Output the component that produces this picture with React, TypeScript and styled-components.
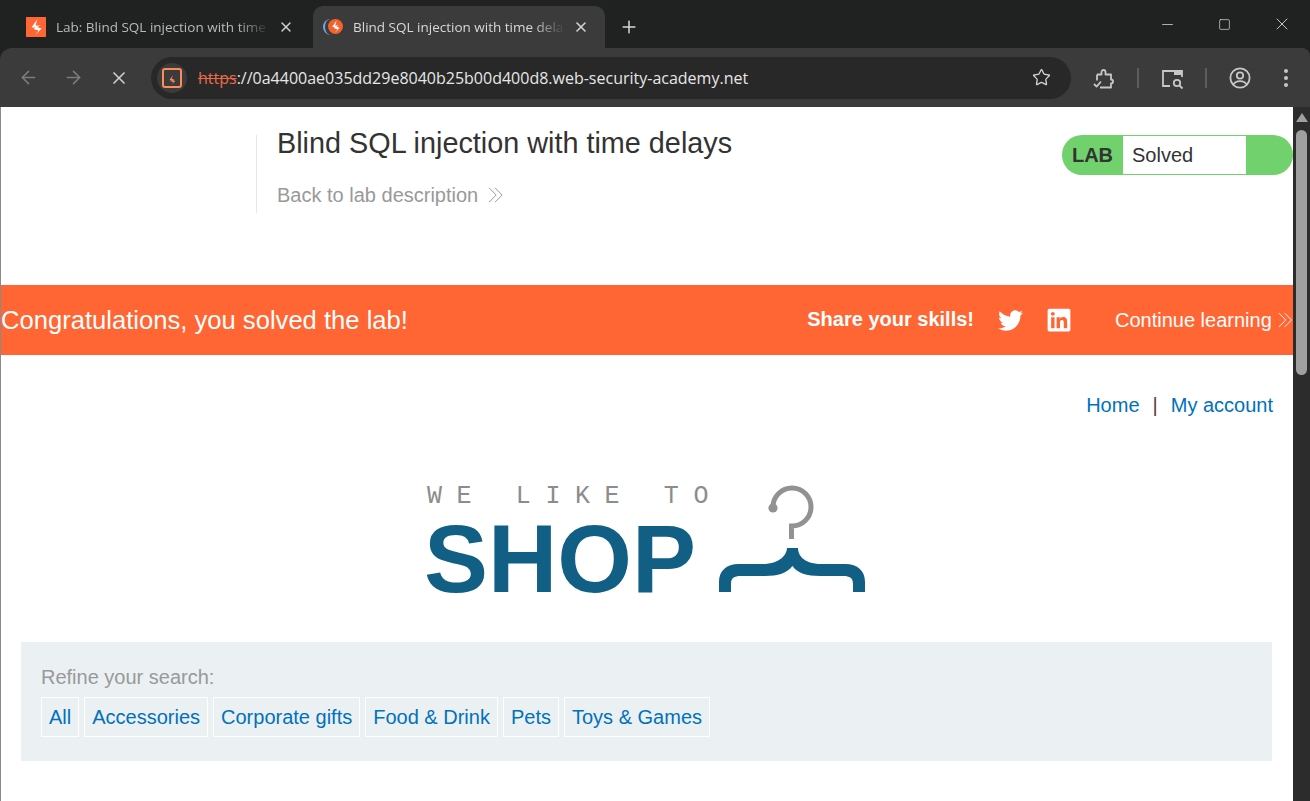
import React from 'react'
import styled, { createGlobalStyle } from 'styled-components'
import { ArrowLeft, ArrowRight, Minus, Plus, Square, Star, X } from 'lucide-react'
import { FaLinkedin, FaTwitter } from 'react-icons/fa'

const GlobalStyle = createGlobalStyle`
  html, body {
    margin: 0;
    padding: 0;
    background: #202221;
    overflow: hidden;
  }
  * { box-sizing: border-box; }
`

const Bolt = ({ color = '#fff' }: { color?: string }) => (
  <svg width="100%" height="100%" viewBox="0 0 20 20">
    <path d="M11.5 2 5.5 10.5h4L7.5 12l5 1.5-3 4.5 6-6.5-4.5-1.5 3.5-1.5H9.5z" fill={color} />
  </svg>
)

const Chevrons = ({ color, size }: { color: string; size: number }) => (
  <svg width={size} height={size} viewBox="0 0 16 16" fill="none" stroke={color} strokeWidth="1">
    <path d="M1 .8 8.2 8 1 15.2" />
    <path d="M7 .8 14.2 8 7 15.2" />
  </svg>
)

const App = () => {
  const filters = ['All', 'Accessories', 'Corporate gifts', 'Food & Drink', 'Pets', 'Toys & Games']

  return (
    <Frame>
      <GlobalStyle />
      <TabStrip>
        <Tab>
          <SquareFavicon><Bolt /></SquareFavicon>
          <TabTitle>Lab: Blind SQL injection with time delays</TabTitle>
          <TabClose><X size={16} strokeWidth={2} /></TabClose>
        </Tab>
        <Tab $active>
          <GlobeFavicon>
            <RoundFavicon><Bolt /></RoundFavicon>
          </GlobeFavicon>
          <TabTitle>Blind SQL injection with time delays</TabTitle>
          <TabClose><X size={16} strokeWidth={2.4} /></TabClose>
        </Tab>
        <NewTab><Plus size={20} strokeWidth={1.8} /></NewTab>
        <WindowControls>
          <WindowButton><Minus size={17} strokeWidth={1} /></WindowButton>
          <WindowButton><Square size={13} strokeWidth={1.2} /></WindowButton>
          <WindowButton><X size={20} strokeWidth={1} /></WindowButton>
        </WindowControls>
      </TabStrip>

      <Toolbar>
        <NavIcon $dim><ArrowLeft size={21} strokeWidth={1.8} /></NavIcon>
        <NavIcon $dim><ArrowRight size={21} strokeWidth={1.8} /></NavIcon>
        <NavIcon><X size={20} strokeWidth={2} /></NavIcon>
        <Omnibox>
          <SiteChip>
            <SiteIcon><Bolt color="#ff8a5c" /></SiteIcon>
          </SiteChip>
          <Url>
            <Insecure>https</Insecure>
            <span>://0a4400ae035dd29e8040b25b00d400d8.web-security-academy.net</span>
          </Url>
          <StarIcon><Star size={19} strokeWidth={1.7} /></StarIcon>
        </Omnibox>
        <ToolIcons>
          <svg width="26" height="26" viewBox="0 0 26 26" fill="none" stroke="#c7c7c7" strokeWidth="1.8" strokeLinejoin="round">
            <path d="M6 9.5h4.5V7a2 2 0 0 1 4 0v2.5H20v5a2 2 0 0 1 0 4v4H9" />
            <path d="M6 9.5v6" />
            <path d="M3 19l2.6 2.6L10 16.5" />
          </svg>
          <ToolDivider />
          <svg width="26" height="26" viewBox="0 0 26 26" fill="none" stroke="#c7c7c7" strokeWidth="1.8">
            <path d="M11 21H4V6h19v6" />
            <path d="M15 6h8v4h-8z" fill="#c7c7c7" stroke="none" />
            <circle cx="18" cy="18" r="3.2" />
            <path d="m20.5 20.5 3 3" />
          </svg>
          <ToolDivider />
          <svg width="26" height="26" viewBox="0 0 26 26" fill="none" stroke="#c7c7c7" strokeWidth="1.8">
            <circle cx="13" cy="13" r="9.6" />
            <circle cx="13" cy="10.5" r="3.2" />
            <path d="M6.2 19.5c1.6-2.6 4-3.4 6.8-3.4s5.2.8 6.8 3.4" />
          </svg>
          <Dots>
            <svg width="6" height="20" viewBox="0 0 6 20" fill="#c7c7c7">
              <circle cx="3" cy="3" r="2" />
              <circle cx="3" cy="10" r="2" />
              <circle cx="3" cy="17" r="2" />
            </svg>
          </Dots>
        </ToolIcons>
      </Toolbar>

      <Viewport>
        <Page>
          <LabHeader>
            <TitleBlock>
              <LabTitle>Blind SQL injection with time delays</LabTitle>
              <BackLink>
                Back to lab description
                <Chevrons color="#999" size={16} />
              </BackLink>
            </TitleBlock>
            <StatusPill>
              <StatusLabel>LAB</StatusLabel>
              <StatusValue>Solved</StatusValue>
            </StatusPill>
          </LabHeader>

          <Banner>
            <Congrats>Congratulations, you solved the lab!</Congrats>
            <ShareText>Share your skills!</ShareText>
            <TwitterIcon><FaTwitter size={25} /></TwitterIcon>
            <LinkedinIcon><FaLinkedin size={26} /></LinkedinIcon>
            <ContinueLink>
              Continue learning
              <Chevrons color="#fff" size={16} />
            </ContinueLink>
          </Banner>

          <AccountNav>
            <NavLink>Home</NavLink>
            <NavSep>|</NavSep>
            <NavLink>My account</NavLink>
          </AccountNav>

          <LogoRow>
            <svg width="445" height="116" viewBox="425 480 445 116">
              <text x="427" y="503" fontFamily="'Liberation Mono', monospace" fontSize="25" letterSpacing="14.6" fill="#8c8c8c">WE LIKE TO</text>
              <text x="424" y="592" fontFamily="'Liberation Sans', Arial, sans-serif" fontWeight="700" fontSize="96" fill="#115f84">SHOP</text>
              <circle cx="773" cy="508" r="4.6" fill="#929292" />
              <path d="M773 507A19 19 0 1 1 791.5 526V539" fill="none" stroke="#929292" strokeWidth="5" />
              <path d="M787 548H798C798 553 801 564 822 564H845C858 564 865 571 865 582V592H853V584C853 578 850 576 843 576H820C807 576 797 573 792.500 566C787 573 778 576 765 576H741C734 576 731 578 731 584V592H719V582C719 571 726 564 739 564H762C782 564 787 553 787 548Z" fill="#115f84" />
            </svg>
          </LogoRow>

          <FilterPanel>
            <FilterLabel>Refine your search:</FilterLabel>
            <FilterRow>
              {filters.map((f) => (
                <FilterButton key={f}>{f}</FilterButton>
              ))}
            </FilterRow>
          </FilterPanel>
        </Page>
        <Scrollbar>
          <ScrollArrow />
          <ScrollThumb />
        </Scrollbar>
      </Viewport>
    </Frame>
  )
}

export default App

const Frame = styled.div`
  width: 1310px;
  height: 801px;
  display: flex;
  flex-direction: column;
  overflow: hidden;
  background: #202221;
`
const TabStrip = styled.div`
  height: 48px;
  display: flex;
  align-items: flex-end;
  padding-left: 13px;
  background: #202221;
`
const Tab = styled.div<{ $active?: boolean }>`
  width: ${(p) => (p.$active ? '292px' : '300px')};
  height: 42px;
  display: flex;
  align-items: center;
  padding: 0 ${(p) => (p.$active ? '10px' : '13px')} 0 ${(p) => (p.$active ? '10px' : '13px')};
  border-radius: 10px 10px 0 0;
  background: ${(p) => (p.$active ? '#3b3b3b' : 'transparent')};
  color: ${(p) => (p.$active ? '#d8d8d8' : '#b9b9b9')};
`
const SquareFavicon = styled.div`
  width: 20px;
  height: 20px;
  flex: none;
  margin-right: 10px;
  background: #ff6633;
`
const GlobeFavicon = styled.div`
  width: 20px;
  height: 16px;
  flex: none;
  margin-right: 10px;
  display: flex;
  justify-content: flex-end;
  border-left: 2px solid #7aa7e0;
  border-radius: 8px;
`
const RoundFavicon = styled.div`
  width: 15px;
  height: 15px;
  border-radius: 50%;
  background: #f4622c;
`
const TabTitle = styled.div`
  flex: 1;
  min-width: 0;
  white-space: nowrap;
  overflow: hidden;
  font-family: 'Open Sans', 'Noto Sans', sans-serif;
  font-size: 13.5px;
  mask-image: linear-gradient(to right, #000 85%, transparent 100%);
`
const TabClose = styled.div`
  width: 24px;
  flex: none;
  display: flex;
  justify-content: flex-end;
  margin-right: 6px;
  color: #d4d4d4;
`
const NewTab = styled.div`
  height: 42px;
  margin-left: 14px;
  display: flex;
  align-items: center;
  color: #d8d8d8;
`
const WindowControls = styled.div`
  margin-left: auto;
  height: 48px;
  display: flex;
  align-items: center;
  color: #e8e8e8;
`
const WindowButton = styled.div`
  width: 57px;
  display: flex;
  justify-content: center;
`
const Toolbar = styled.div`
  height: 59px;
  display: flex;
  align-items: center;
  padding-left: 6px;
  background: #3b3b3b;
  border-radius: 12px 8px 0 0;
`
const NavIcon = styled.div<{ $dim?: boolean }>`
  width: 45px;
  height: 42px;
  display: flex;
  align-items: center;
  justify-content: center;
  color: ${(p) => (p.$dim ? '#7c7c7c' : '#cfcfcf')};
`
const Omnibox = styled.div`
  width: 920px;
  height: 42px;
  margin-left: 10px;
  display: flex;
  align-items: center;
  padding-left: 6px;
  border-radius: 21px;
  background: #282828;
`
const SiteChip = styled.div`
  width: 30px;
  height: 30px;
  flex: none;
  display: flex;
  align-items: center;
  justify-content: center;
  border-radius: 50%;
  background: #3b3b3b;
`
const SiteIcon = styled.div`
  width: 20px;
  height: 20px;
  padding: 2px;
  border: 2px solid #ff8a5c;
  border-radius: 3px;
`
const Url = styled.div`
  flex: 1;
  margin-left: 11px;
  white-space: nowrap;
  font-family: 'Open Sans', 'Noto Sans', sans-serif;
  font-size: 16px;
  color: #e6e6e6;
`
const Insecure = styled.span`
  color: #e8694a;
  text-decoration: line-through;
`
const StarIcon = styled.div`
  margin-right: 20px;
  display: flex;
  color: #d0d0d0;
`
const ToolIcons = styled.div`
  display: flex;
  align-items: center;
  margin-left: 20px;
`
const ToolDivider = styled.div`
  width: 2px;
  height: 20px;
  margin: 0 20px;
  background: #5c5c5c;
`
const Dots = styled.div`
  margin-left: 30px;
  display: flex;
`
const Viewport = styled.div`
  flex: 1;
  min-height: 0;
  display: flex;
`
const Page = styled.div`
  width: 1293px;
  flex: none;
  border-left: 1px solid #8a8a8a;
  background: #fff;
  font-family: 'Liberation Sans', Arial, sans-serif;
  font-size: 20px;
  line-height: 24px;
  overflow: hidden;
`
const LabHeader = styled.div`
  height: 178px;
  display: flex;
  align-items: flex-start;
  padding-top: 28px;
`
const TitleBlock = styled.div`
  height: 78px;
  margin-left: 255px;
  padding-left: 20px;
  border-left: 1px solid #e6e6e6;
`
const LabTitle = styled.div`
  margin-top: -8px;
  font-size: 28.8px;
  line-height: 32px;
  color: #333332;
`
const BackLink = styled.div`
  margin-top: 24px;
  display: flex;
  align-items: center;
  gap: 10px;
  color: #999;
`
const StatusPill = styled.div`
  width: 231px;
  height: 40px;
  margin-left: auto;
  display: flex;
  align-items: stretch;
  padding: 1px 47px 1px 0;
  border-radius: 20px;
  background: #70d16d;
`
const StatusLabel = styled.div`
  width: 61px;
  flex: none;
  display: flex;
  align-items: center;
  justify-content: center;
  font-weight: 700;
  color: #333332;
`
const StatusValue = styled.div`
  flex: 1;
  display: flex;
  align-items: center;
  padding-left: 9px;
  background: #fff;
  color: #333332;
`
const Banner = styled.div`
  height: 70px;
  display: flex;
  align-items: center;
  background: #ff6633;
  color: #fff;
  white-space: nowrap;
`
const Congrats = styled.div`
  font-size: 25.6px;
  margin-right: auto;
`
const ShareText = styled.div`
  font-weight: 700;
  margin-top: -2px;
`
const TwitterIcon = styled.div`
  margin-left: 24px;
  display: flex;
`
const LinkedinIcon = styled.div`
  margin-left: 23px;
  display: flex;
`
const ContinueLink = styled.div`
  width: 178px;
  margin-left: 43px;
  display: flex;
  align-items: center;
  gap: 6px;
`
const AccountNav = styled.div`
  display: flex;
  justify-content: flex-end;
  padding: 38px 20px 0 0;
`
const NavLink = styled.div`
  color: #0071bc;
`
const NavSep = styled.div`
  margin: 0 13px;
  color: #5c3a36;
`
const LogoRow = styled.div`
  margin-top: 63px;
  display: flex;
  justify-content: center;
`
const FilterPanel = styled.div`
  height: 119px;
  margin: 46px 21px 0 20px;
  padding: 23px 20px 0;
  background: #ebf0f3;
`
const FilterLabel = styled.div`
  color: #999;
`
const FilterRow = styled.div`
  display: flex;
  gap: 5px;
  margin-top: 8px;
`
const FilterButton = styled.div`
  height: 40px;
  display: flex;
  align-items: center;
  padding: 0 7px;
  border: 1px solid #fff;
  color: #0071bc;
`
const Scrollbar = styled.div`
  flex: 1;
  display: flex;
  flex-direction: column;
  align-items: center;
  background: #2c2c2c;
`
const ScrollArrow = styled.div`
  width: 0;
  height: 0;
  margin-top: 6px;
  border-left: 6px solid transparent;
  border-right: 6px solid transparent;
  border-bottom: 9px solid #a0a0a0;
`
const ScrollThumb = styled.div`
  width: 11px;
  height: 245px;
  margin-top: 8px;
  border-radius: 6px;
  background: #a0a0a0;
`
